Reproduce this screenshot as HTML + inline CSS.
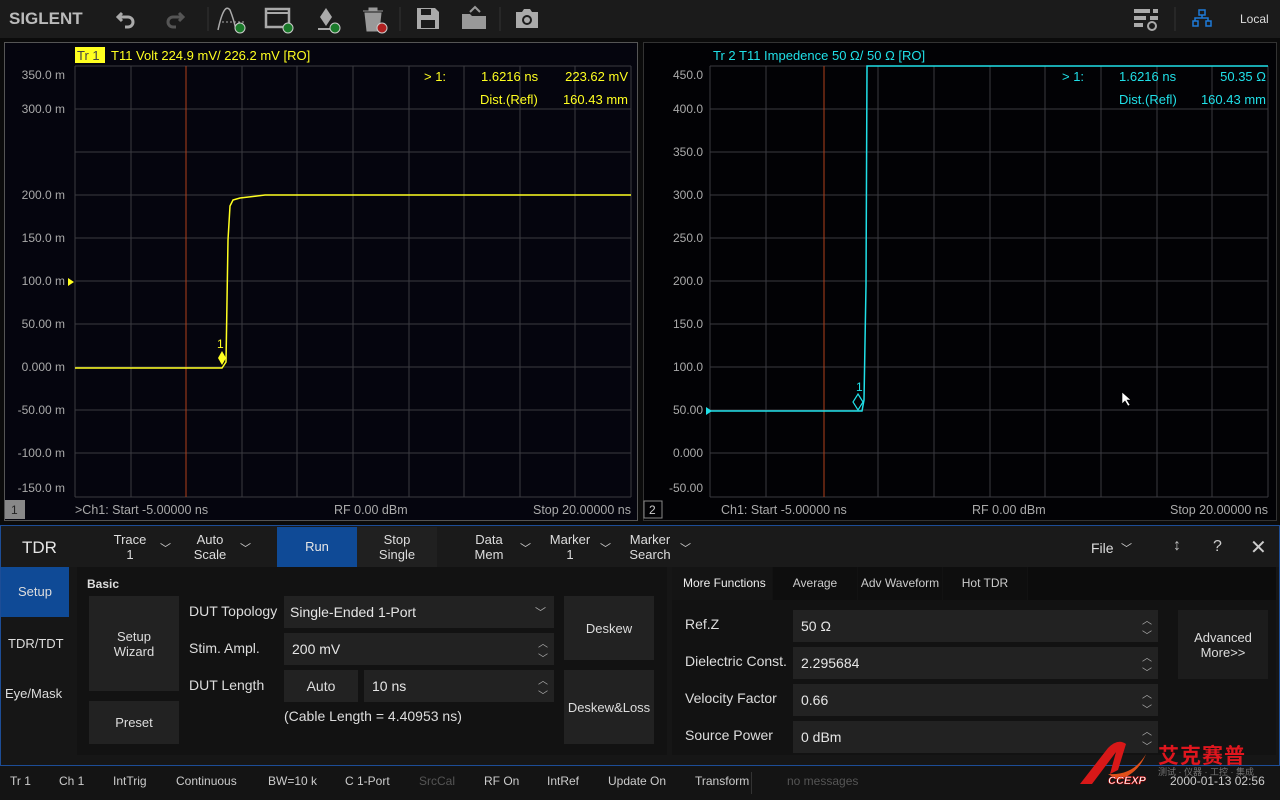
<!DOCTYPE html>
<html><head><meta charset="utf-8"><style>
*{margin:0;padding:0;box-sizing:border-box}
body{width:1280px;height:800px;background:#0b0b0b;font-family:"Liberation Sans",Arial,sans-serif;overflow:hidden;position:relative;color:#ddd}
.a{position:absolute}
.t{position:absolute;font-size:13px;white-space:nowrap}
.btn{position:absolute;background:#222;color:#ddd;font-size:13px;display:flex;align-items:center;justify-content:center;text-align:center;line-height:15px}
.inp{position:absolute;background:#222;color:#e6e6e6;font-size:14px;display:flex;align-items:center;padding-left:8px}
.ud{position:absolute;right:6px;top:4px;font-size:10px;color:#aaa;line-height:15px;text-align:center}
.mi{position:absolute;top:527px;height:40px;color:#ddd;font-size:13px;text-align:center;line-height:15px;padding-top:5px}
.chev{position:absolute;font-size:11px;color:#ccc}
.st{position:absolute;top:774px;font-size:12px;color:#ccc}
</style></head><body>
<!-- top toolbar -->
<div class="a" style="left:0;top:0;width:1280px;height:38px;background:#1b1b1b"></div>
<div class="t" style="left:9px;top:9px;font-size:17px;font-weight:bold;color:#bbb;letter-spacing:0">SIGLENT</div>
<svg class="a" style="left:0;top:0" width="1280" height="38">
<g fill="none" stroke="#aaa" stroke-width="3">
<path d="M122 13 l-4 4 4 4 M118 17 h10 a5 5 0 0 1 0 10 h-3"/>
</g>
<path d="M179 13 l4 4 -4 4 M183 17 h-10 a5 5 0 0 0 0 10 h3" fill="none" stroke="#555" stroke-width="3"/>
<line x1="208" y1="7" x2="208" y2="31" stroke="#333"/>
<path d="M218 30 q6 -28 12 -20 q4 10 6 20" fill="none" stroke="#aaa" stroke-width="1.5"/>
<line x1="222" y1="22" x2="244" y2="22" stroke="#aaa" stroke-dasharray="2 2"/>
<circle cx="240" cy="28" r="5" fill="#1a7a2a" stroke="#ccc"/>
<rect x="266" y="9" width="23" height="18" fill="none" stroke="#aaa" stroke-width="2.5"/>
<line x1="266" y1="13" x2="289" y2="13" stroke="#aaa" stroke-width="2"/>
<circle cx="288" cy="28" r="5" fill="#1a7a2a" stroke="#ccc"/>
<path d="M326 8 l6 9 -6 9 -6 -9z" fill="#aaa"/><line x1="318" y1="29" x2="334" y2="29" stroke="#aaa" stroke-width="2"/>
<circle cx="335" cy="28" r="5" fill="#1a7a2a" stroke="#ccc"/>
<path d="M363 11 h20 M369 11 v-3 h8 v3 M365 13 h16 l-2 18 h-12z" fill="#999" stroke="#999"/>
<circle cx="382" cy="28" r="5" fill="#b02020" stroke="#ccc"/>
<line x1="400" y1="7" x2="400" y2="31" stroke="#333"/>
<path d="M417 8 h18 l4 4 v17 h-22z" fill="#aaa"/><rect x="421" y="9" width="10" height="6" fill="#1b1b1b"/><rect x="421" y="20" width="14" height="8" fill="#1b1b1b"/>
<path d="M462 14 h8 l2 2 h14 v13 h-24z" fill="#999"/><path d="M470 12 l5 -5 5 5" fill="none" stroke="#999" stroke-width="2"/>
<line x1="500" y1="7" x2="500" y2="31" stroke="#333"/>
<path d="M516 12 h6 l2 -3 h6 l2 3 h6 v16 h-22z" fill="#aaa"/><circle cx="527" cy="20" r="5" fill="#1b1b1b"/><circle cx="527" cy="20" r="3" fill="#aaa"/>
<g fill="#aaa"><rect x="1134" y="9" width="16" height="4"/><rect x="1153" y="9" width="5" height="4"/><rect x="1134" y="16" width="12" height="4"/><rect x="1150" y="16" width="8" height="4"/><rect x="1134" y="23" width="9" height="4"/></g>
<circle cx="1152" cy="26" r="4" fill="none" stroke="#aaa" stroke-width="2"/>
<line x1="1175" y1="7" x2="1175" y2="31" stroke="#333"/>
<g fill="none" stroke="#1e7ad8" stroke-width="1.5"><rect x="1199" y="10" width="6" height="5"/><rect x="1193" y="21" width="5" height="5"/><rect x="1206" y="21" width="5" height="5"/><path d="M1202 15 v3 M1195 21 v-3 h13 v3"/></g>
</svg>
<div class="t" style="left:1240px;top:12px;font-size:12px;color:#ddd">Local</div>

<!-- left plot -->
<div class="a" style="left:4px;top:42px;width:634px;height:479px;border:1px solid #555;background:#05050e"></div>
<div class="a" style="left:643px;top:42px;width:634px;height:479px;border:1px solid #333;background:#020205"></div>
<svg class="a" style="left:0;top:0" width="1280" height="525" font-family="Liberation Sans, Arial, sans-serif" font-size="12">
<g stroke="#3a3a40" stroke-width="1">
<path d="M75 66V497 M131 66V497 M297 66V497 M353 66V497 M409 66V497 M464 66V497 M520 66V497 M575 66V497 M631 66V497 M242 66V497"/>
<path d="M75 66H631 M75 109H631 M75 152H631 M75 195H631 M75 238H631 M75 281H631 M75 324H631 M75 367H631 M75 410H631 M75 453H631 M75 497H631"/>
<path d="M710 66V497 M766 66V497 M878 66V497 M934 66V497 M990 66V497 M1045 66V497 M1101 66V497 M1157 66V497 M1212 66V497 M1268 66V497"/>
<path d="M710 66H1268 M710 109H1268 M710 152H1268 M710 195H1268 M710 238H1268 M710 281H1268 M710 324H1268 M710 367H1268 M710 410H1268 M710 453H1268 M710 497H1268"/>
</g>
<line x1="186" y1="66" x2="186" y2="497" stroke="#b0401a"/>
<line x1="824" y1="66" x2="824" y2="497" stroke="#b0401a"/>
<polyline points="75,368 222,368 226,362 228,240 230,206 233,200 240,198 265,195 631,195" fill="none" stroke="#ffff20" stroke-width="1.5"/>
<path d="M222 351 l4 7 -4 7 -4 -7z" fill="#ffff20"/>
<text x="217" y="348" fill="#ffff20" font-size="12">1</text>
<path d="M68 278 l6 4 -6 4z" fill="#ffff20"/>
<polyline points="710,411 862,411 864,400 866,285 867,66 1268,66" fill="none" stroke="#20e0e8" stroke-width="1.5"/>
<path d="M858 394 l5 8 -5 8 -5 -8z" fill="none" stroke="#20e0e8" stroke-width="1.2"/>
<text x="856" y="391" fill="#20e0e8">1</text>
<path d="M706 407 l6 4 -6 4z" fill="#20e0e8"/>
<path d="M1122 392 l0 12 3 -3 3 5 2 -1 -3 -5 4 0z" fill="#fff" stroke="#000" stroke-width="0.6"/>
<g fill="#aaa" text-anchor="end">
<text x="65" y="79">350.0 m</text><text x="65" y="113">300.0 m</text><text x="65" y="199">200.0 m</text><text x="65" y="242">150.0 m</text><text x="65" y="285">100.0 m</text><text x="65" y="328">50.00 m</text><text x="65" y="371">0.000 m</text><text x="65" y="414">-50.00 m</text><text x="65" y="457">-100.0 m</text><text x="65" y="492">-150.0 m</text>
<text x="703" y="79">450.0</text><text x="703" y="113">400.0</text><text x="703" y="156">350.0</text><text x="703" y="199">300.0</text><text x="703" y="242">250.0</text><text x="703" y="285">200.0</text><text x="703" y="328">150.0</text><text x="703" y="371">100.0</text><text x="703" y="414">50.00</text><text x="703" y="457">0.000</text><text x="703" y="492">-50.00</text>
</g>
<rect x="75" y="47" width="30" height="16" fill="#ffff20"/>
<text x="77" y="60" fill="#444" font-size="13">Tr 1</text>
<g fill="#ffff20" font-size="13"><text x="111" y="60">T11  Volt 224.9 mV/ 226.2 mV  [RO]</text>
<text x="424" y="81">&gt; 1:</text><text x="481" y="81">1.6216 ns</text><text x="628" y="81" text-anchor="end">223.62 mV</text>
<text x="480" y="104">Dist.(Refl)</text><text x="628" y="104" text-anchor="end">160.43 mm</text></g>
<g fill="#20e0e8" font-size="13"><text x="713" y="60">Tr 2   T11  Impedence 50 Ω/  50 Ω  [RO]</text>
<text x="1062" y="81">&gt; 1:</text><text x="1119" y="81">1.6216 ns</text><text x="1266" y="81" text-anchor="end">50.35 Ω</text>
<text x="1119" y="104">Dist.(Refl)</text><text x="1266" y="104" text-anchor="end">160.43 mm</text></g>
<rect x="5" y="500" width="20" height="19" fill="#888"/><text x="11" y="514" fill="#222">1</text>
<rect x="644" y="501" width="18" height="17" fill="none" stroke="#888"/><text x="649" y="514" fill="#ccc">2</text>
<g fill="#aaa" font-size="12.5"><text x="75" y="514">&gt;Ch1: Start -5.00000 ns</text><text x="334" y="514">RF 0.00 dBm</text><text x="631" y="514" text-anchor="end">Stop 20.00000 ns</text>
<text x="721" y="514">Ch1: Start -5.00000 ns</text><text x="972" y="514">RF 0.00 dBm</text><text x="1268" y="514" text-anchor="end">Stop 20.00000 ns</text></g>
</svg>

<!-- bottom panel -->
<div class="a" style="left:0;top:525px;width:1280px;height:241px;border:1px solid #1d4d96;background:#161616"></div>
<div class="a" style="left:1px;top:526px;width:1278px;height:41px;background:#1a1a1a"></div>
<div class="t" style="left:22px;top:538px;font-size:17px;color:#e6e6e6">TDR</div>
<div class="mi" style="left:108px;width:44px">Trace<br>1</div><div class="chev" style="left:160px;top:540px">﹀</div>
<div class="mi" style="left:188px;width:44px">Auto<br>Scale</div><div class="chev" style="left:240px;top:540px">﹀</div>
<div class="a" style="left:277px;top:527px;width:80px;height:40px;background:#0f4a96;color:#e6e6e6;font-size:13px;text-align:center;line-height:40px">Run</div>
<div class="mi" style="left:357px;width:80px;background:#202020">Stop<br>Single</div>
<div class="mi" style="left:466px;width:46px">Data<br>Mem</div><div class="chev" style="left:520px;top:540px">﹀</div>
<div class="mi" style="left:546px;width:48px">Marker<br>1</div><div class="chev" style="left:600px;top:540px">﹀</div>
<div class="mi" style="left:626px;width:48px">Marker<br>Search</div><div class="chev" style="left:680px;top:540px">﹀</div>
<div class="t" style="left:1091px;top:540px;font-size:14px">File</div><div class="chev" style="left:1121px;top:540px">﹀</div>
<div class="t" style="left:1173px;top:537px;font-size:16px;color:#bbb">↕</div>
<div class="t" style="left:1213px;top:538px;font-size:16px;color:#ccc">?</div>
<div class="t" style="left:1250px;top:535px;font-size:20px;color:#ccc">✕</div>

<div class="a" style="left:1px;top:567px;width:68px;height:50px;background:#0f4a96;color:#ddd;font-size:13px;text-align:center;line-height:50px">Setup</div>
<div class="t" style="left:8px;top:636px;font-size:13px">TDR/TDT</div>
<div class="t" style="left:5px;top:686px;font-size:13px">Eye/Mask</div>
<div class="a" style="left:77px;top:567px;width:590px;height:188px;background:#121212"></div>
<div class="t" style="left:87px;top:577px;font-size:12px;font-weight:bold;color:#ddd">Basic</div>
<div class="btn" style="left:89px;top:596px;width:90px;height:95px">Setup<br>Wizard</div>
<div class="btn" style="left:89px;top:701px;width:90px;height:43px">Preset</div>
<div class="t" style="left:189px;top:603px;font-size:14px">DUT Topology</div>
<div class="t" style="left:189px;top:640px;font-size:14px">Stim. Ampl.</div>
<div class="t" style="left:189px;top:677px;font-size:14px">DUT Length</div>
<div class="inp" style="left:284px;top:596px;width:270px;height:32px;padding-left:6px">Single-Ended 1-Port<span style="position:absolute;right:8px;font-size:11px;color:#aaa">﹀</span></div>
<div class="inp" style="left:284px;top:633px;width:270px;height:32px">200 mV<div class="ud">︿<br>﹀</div></div>
<div class="btn" style="left:284px;top:670px;width:74px;height:32px;font-size:14px">Auto</div>
<div class="inp" style="left:364px;top:670px;width:190px;height:32px">10 ns<div class="ud">︿<br>﹀</div></div>
<div class="t" style="left:284px;top:708px;font-size:14px">(Cable Length = 4.40953 ns)</div>
<div class="btn" style="left:564px;top:596px;width:90px;height:64px">Deskew</div>
<div class="btn" style="left:564px;top:670px;width:90px;height:74px">Deskew&amp;Loss</div>

<div class="a" style="left:672px;top:567px;width:604px;height:188px;background:#121212"></div>
<div class="a" style="left:672px;top:567px;width:100px;height:33px;background:#141414;color:#eee;font-size:12px;line-height:33px;padding-left:11px">More Functions</div>
<div class="a" style="left:773px;top:567px;width:84px;height:33px;background:#0e0e0e;color:#ccc;font-size:12px;line-height:33px;text-align:center">Average</div>
<div class="a" style="left:858px;top:567px;width:84px;height:33px;background:#0e0e0e;color:#ccc;font-size:12px;line-height:33px;text-align:center">Adv Waveform</div>
<div class="a" style="left:943px;top:567px;width:84px;height:33px;background:#0e0e0e;color:#ccc;font-size:12px;line-height:33px;text-align:center">Hot TDR</div>
<div class="a" style="left:1028px;top:567px;width:248px;height:33px;background:#0c0c0c"></div>
<div class="t" style="left:685px;top:616px;font-size:14px">Ref.Z</div>
<div class="t" style="left:685px;top:653px;font-size:14px">Dielectric Const.</div>
<div class="t" style="left:685px;top:690px;font-size:14px">Velocity Factor</div>
<div class="t" style="left:685px;top:727px;font-size:14px">Source Power</div>
<div class="inp" style="left:793px;top:610px;width:365px;height:32px">50 Ω<div class="ud">︿<br>﹀</div></div>
<div class="inp" style="left:793px;top:647px;width:365px;height:32px">2.295684<div class="ud">︿<br>﹀</div></div>
<div class="inp" style="left:793px;top:684px;width:365px;height:32px">0.66<div class="ud">︿<br>﹀</div></div>
<div class="inp" style="left:793px;top:721px;width:365px;height:32px">0 dBm<div class="ud">︿<br>﹀</div></div>
<div class="btn" style="left:1178px;top:610px;width:90px;height:69px;background:#1c1c1c;font-size:13px">Advanced<br>More&gt;&gt;</div>

<!-- status -->
<div class="a" style="left:0;top:766px;width:1280px;height:34px;background:#141414"></div>
<div class="st" style="left:10px">Tr 1</div><div class="st" style="left:59px">Ch 1</div><div class="st" style="left:113px">IntTrig</div>
<div class="st" style="left:176px">Continuous</div><div class="st" style="left:268px">BW=10 k</div><div class="st" style="left:345px">C 1-Port</div>
<div class="st" style="left:419px;color:#555">SrcCal</div><div class="st" style="left:484px">RF On</div><div class="st" style="left:547px">IntRef</div>
<div class="st" style="left:608px">Update On</div><div class="st" style="left:695px">Transform</div>
<div class="a" style="left:751px;top:772px;width:1px;height:22px;background:#333"></div>
<div class="st" style="left:787px;color:#555">no messages</div>
<div class="st" style="left:1170px;color:#ccc">2000-01-13 02:56</div>
<svg class="a" style="left:1078px;top:740px" width="100" height="48">
<path d="M2 44 L30 8 Q40 -2 48 4 L40 30 L32 34 L38 12 L14 44z" fill="#d81818"/>
<path d="M30 34 Q55 36 68 14 Q60 34 40 40z" fill="#e0501a"/>
<text x="30" y="44" font-size="11" font-weight="bold" font-style="italic" fill="#fff" stroke="#c00" stroke-width="0.5" font-family="Liberation Sans, sans-serif">CCEXP</text>
</svg>
<div class="t" style="left:1158px;top:740px;font-size:21px;font-weight:bold;color:#e0161e;font-family:'Liberation Sans','Noto Sans CJK SC',sans-serif;letter-spacing:1px">艾克赛普</div>
<div class="t" style="left:1158px;top:765px;font-size:9px;color:#777;font-family:'Liberation Sans','Noto Sans CJK SC',sans-serif">测试 · 仪器 · 工控 · 集成</div>
</body></html>
